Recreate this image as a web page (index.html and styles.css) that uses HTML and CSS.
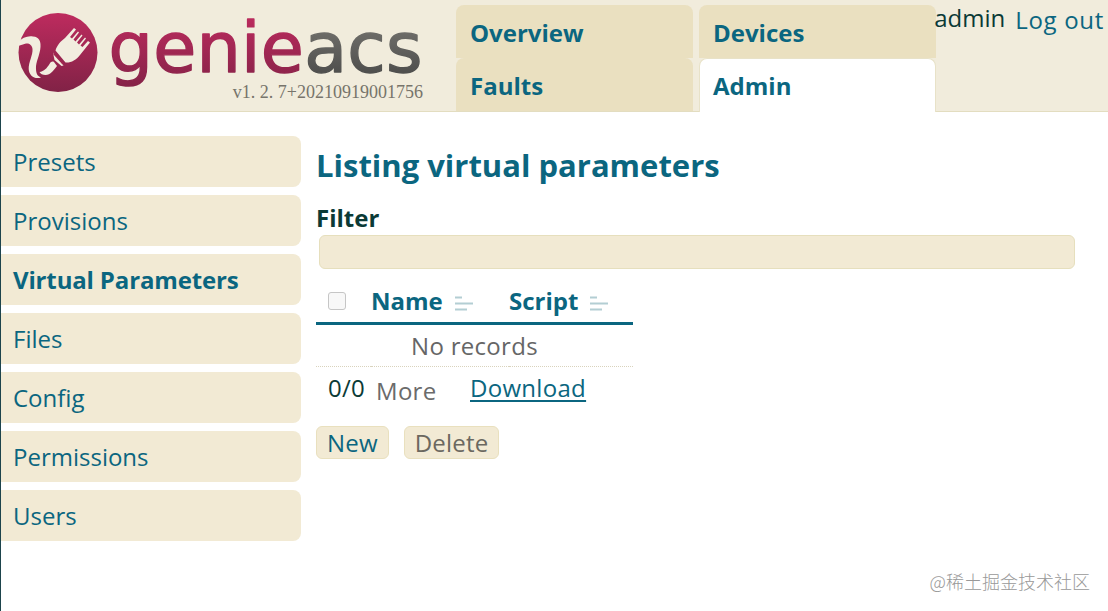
FILE: index.html
```
<!DOCTYPE html>
<html lang="en">
<head>
    <meta charset="UTF-8">
    <meta name="viewport" content="width=device-width, initial-scale=1.0">
    <title>Listing virtual parameters - GenieACS</title>
    <link rel="stylesheet" href="styles.css">
</head>
<body>
    <header class="header">
        <div class="logo">
            <svg class="logo-img" width="432" height="98" viewBox="0 0 432 98">
                <defs>
                    <linearGradient id="red" gradientUnits="userSpaceOnUse" x1="0" y1="14" x2="0" y2="92">
                        <stop offset="0" stop-color="#bd2b5e"/>
                        <stop offset="1" stop-color="#812246"/>
                    </linearGradient>
                    <linearGradient id="gray" gradientUnits="userSpaceOnUse" x1="0" y1="33" x2="0" y2="72">
                        <stop offset="0" stop-color="#6c6b67"/>
                        <stop offset="1" stop-color="#50504e"/>
                    </linearGradient>
                </defs>
                <circle cx="57" cy="52.5" r="39.5" fill="url(#red)"/>
                <!-- tail -->
                <path fill="#f2eddf" d="M17 42.500C21 37.500 27 35.500 32 36.500C38 37 40 41 39.500 47C39 55 34.500 62 35 69C35.200 73 36 76 40 77.500C34 79.500 28 76 27.700 69C27.500 62 32 55 31.500 49C31.200 45 28 43 25 43.500L17 46Z"/>
                <!-- brush -->
                <path fill="#f2eddf" d="M38.500 72C43 71.500 46 68 48.500 64C50 61.500 51.500 61 53 62L56 66C53 70 49.500 75 44.500 75C41.500 75 39.500 74 38.500 72Z"/>
                <path fill="#f2eddf" d="M52 52.500L62.500 65.500L60.500 66L53.500 60Z"/>
                <path fill="#f2eddf" d="M54.500 50.500C56 45 60 41 64 38L73 28L75 29.500L69 37L71 38.500L77 31.500L78 32.500L72.500 39.500L74.500 41.500L80.500 34.500L81.500 35.500L76 42.500L78 44.500L84 37.500L85 38.500L79.500 45.500L81.500 47L87 41L89 42.500L79 55C75 60 70 63 64.500 62.500Z"/>
                <path stroke="#a5284f" stroke-width="1.200" fill="none" d="M52.500 53.500L62 64"/>
                <text class="logo-text" x="107.5" y="71.500" textLength="314"><tspan fill="url(#red)" stroke="url(#red)">genie</tspan><tspan fill="url(#gray)" stroke="url(#gray)">acs</tspan></text>
            </svg>
            <span class="version">v1. 2. 7+20210919001756</span>
        </div>

        <nav class="nav">
            <a href="#">Overview</a>
            <a href="#">Devices</a>
            <a href="#">Faults</a>
            <a href="#" class="active">Admin</a>
        </nav>

        <div class="user-menu">
            <span>admin</span>
            <button class="link-btn">Log out</button>
        </div>
    </header>

    <div class="content-wrapper">
        <nav class="side-menu">
            <a href="#">Presets</a>
            <a href="#">Provisions</a>
            <a href="#" class="active">Virtual Parameters</a>
            <a href="#">Files</a>
            <a href="#">Config</a>
            <a href="#">Permissions</a>
            <a href="#">Users</a>
        </nav>

        <main class="content">
            <h1>Listing virtual parameters</h1>

            <div class="filter">
                <b>Filter</b>
                <input type="text">
            </div>

            <table class="table">
                <thead>
                    <tr>
                        <th class="col-check"><input type="checkbox" class="check"></th>
                        <th class="col-name"><div class="sortable"><span>Name</span><svg width="18" height="15" viewBox="0 0 18 15"><path d="M0 1.500H7M0 7.500H18M0 13.500H12" stroke="#b3ced3" stroke-width="2"/></svg></div></th>
                        <th><div class="sortable"><span>Script</span><svg width="18" height="15" viewBox="0 0 18 15"><path d="M0 1.500H7M0 7.500H18M0 13.500H12" stroke="#b3ced3" stroke-width="2"/></svg></div></th>
                    </tr>
                </thead>
                <tbody>
                    <tr>
                        <td colspan="3" class="no-records">No records</td>
                    </tr>
                </tbody>
                <tfoot>
                    <tr>
                        <td colspan="3">
                            <div class="pager">
                                <span class="count">0/0</span>
                                <button class="link-btn more" disabled>More</button>
                                <a href="#" class="download">Download</a>
                            </div>
                        </td>
                    </tr>
                </tfoot>
            </table>

            <div class="actions">
                <button class="btn">New</button>
                <button class="btn" disabled>Delete</button>
            </div>
        </main>
    </div>

    <div class="watermark">@稀土掘金技术社区</div>
</body>
</html>
```
FILE: styles.css
```
* {
    margin: 0;
    padding: 0;
    box-sizing: border-box;
}

body {
    min-height: 611px;
    border-left: 1px solid #1d444c;
    background: #fff;
    color: #0b3a36;
    font-family: "Open Sans", "Noto Sans", sans-serif;
    font-size: 24px;
    overflow: hidden;
}

a {
    color: #0b6680;
    text-decoration: none;
}

button {
    font: inherit;
    cursor: pointer;
}

.header {
    display: flex;
    height: 112px;
    background: #f1ecdc;
    border-bottom: 1px solid #e3ddc0;
}

.logo {
    display: flex;
    flex-direction: column;
    flex-shrink: 0;
    width: 455px;
}

.logo-img {
    display: block;
    height: 98px;
    margin-bottom: -17px;
}

.logo-text {
    font-family: "DejaVu Sans", sans-serif;
    font-size: 70px;
    stroke-width: 1.4px;
    stroke-linejoin: round;
}

.version {
    width: 422px;
    text-align: right;
    font-family: "Liberation Serif", serif;
    font-size: 18px;
    line-height: 22px;
    color: #77746b;
}

.nav {
    display: grid;
    flex-shrink: 0;
    grid-template-columns: 237px 237px;
    grid-template-rows: 53px 53px;
    column-gap: 6px;
    height: 112px;
    padding-top: 5px;
}

.nav a {
    padding-left: 14px;
    border-radius: 8px 8px 0 0;
    background: #eae0c0;
    font-weight: bold;
    line-height: 56px;
}

.nav a.active {
    height: 54px;
    border: 1px solid #e8e2c8;
    border-bottom: none;
    background: #fff;
    padding-left: 13px;
    line-height: 54px;
}

.user-menu {
    display: flex;
    flex: 1;
    justify-content: flex-end;
    gap: 10px;
    min-width: 0;
    padding-right: 5px;
    line-height: 36px;
    white-space: nowrap;
}

.link-btn {
    border: none;
    background: none;
    color: #0b6680;
}

.user-menu .link-btn {
    height: 40px;
    letter-spacing: 0.7px;
    margin-right: -1px;
}

.content-wrapper {
    display: flex;
    gap: 15px;
    padding-top: 24px;
}

.side-menu {
    display: flex;
    flex-direction: column;
    gap: 8px;
    width: 300px;
}

.side-menu a {
    height: 51px;
    padding-left: 12px;
    border-radius: 0 8px 8px 0;
    background: #f2ead4;
    line-height: 52px;
}

.side-menu a.active {
    font-weight: bold;
    letter-spacing: -0.15px;
}

.content {
    flex: 1;
}

h1 {
    color: #0b6680;
    font-size: 31px;
    line-height: 58px;
}

.filter {
    width: 759px;
    padding-top: 7px;
}

.filter b {
    display: block;
    line-height: 34px;
}

.filter input {
    display: block;
    width: 756px;
    height: 34px;
    margin-left: 3px;
    border: 1px solid #e6dfbd;
    border-radius: 6px;
    background: #f2ead4;
}

.table {
    width: 317px;
    margin-top: 11px;
    border-collapse: collapse;
}

.table th {
    height: 43px;
    border-bottom: 3px solid #0b6680;
    color: #0b6680;
    text-align: left;
}

.col-check {
    width: 55px;
    padding-left: 12px;
}

.col-name {
    width: 138px;
}

.check {
    display: block;
    appearance: none;
    width: 18px;
    height: 18px;
    border: 1px solid #c6c6c6;
    border-radius: 3px;
    background: #f8f8f8;
}

.sortable {
    display: flex;
    align-items: center;
    gap: 12px;
    line-height: 40px;
}

.sortable svg {
    margin-top: 5px;
}

.no-records {
    height: 43px;
    padding-top: 1px;
    border-bottom: 1px dotted #d9d3bd;
    color: #666;
    text-align: center;
    letter-spacing: 0.3px;
    line-height: 40px;
}

.pager {
    display: flex;
    padding-left: 12px;
    letter-spacing: 0.3px;
    line-height: 42px;
}

.count {
    width: 48px;
}

.more {
    width: 94px;
    height: 48px;
    margin-bottom: -6px;
    color: #6b6b6b;
    text-align: left;
    letter-spacing: 0.3px;
}

.download {
    text-decoration: underline;
    text-decoration-thickness: 2px;
    text-underline-offset: 3px;
}

.actions {
    display: flex;
    gap: 15px;
    margin-top: 17px;
}

.btn {
    height: 33px;
    padding: 0 10px;
    border: 1px solid #e9e0be;
    border-radius: 6px;
    background: #f2ead4;
    color: #0b6680;
    letter-spacing: 0.2px;
    line-height: 31px;
}

.btn:disabled {
    color: #6b6860;
}

.watermark {
    position: absolute;
    right: 18px;
    bottom: 18px;
    color: #999;
    font-family: "Noto Sans CJK SC", sans-serif;
    font-size: 18px;
    font-weight: 300;
    line-height: 24px;
}
```
